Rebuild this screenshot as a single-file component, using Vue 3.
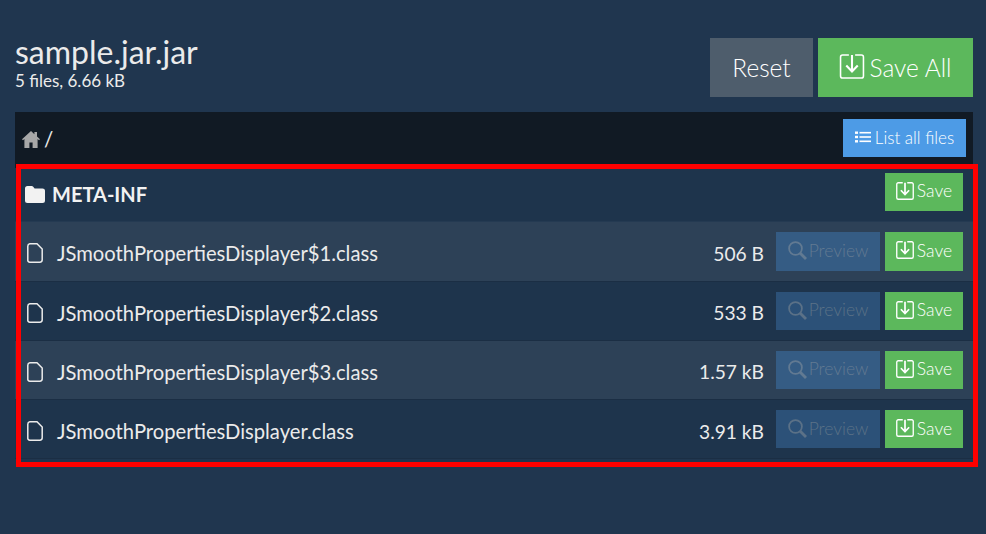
<script setup>
const files = [
  { name: 'JSmoothPropertiesDisplayer$1.class', size: '506 B' },
  { name: 'JSmoothPropertiesDisplayer$2.class', size: '533 B' },
  { name: 'JSmoothPropertiesDisplayer$3.class', size: '1.57 kB' },
  { name: 'JSmoothPropertiesDisplayer.class', size: '3.91 kB' },
]
const savePath = 'M9 1H3a2 2 0 0 0-2 2v18a2 2 0 0 0 2 2h18a2 2 0 0 0 2-2V3a2 2 0 0 0-2-2h-6'
const arrowPath = 'M12 1v15.5M6.5 11l5.5 5.8 5.5-5.8'
</script>

<template>
  <div class="page">
    <header class="head">
      <div class="title">
        <h1>sample.jar.jar</h1>
        <p>5 files, 6.66 kB</p>
      </div>
      <div class="actions">
        <button class="btn big reset"><span>Reset</span></button>
        <button class="btn big green">
          <svg class="ico-save-big" viewBox="0 0 24 24" fill="none" stroke="currentColor" stroke-width="1.5"><path :d="savePath"/><path :d="arrowPath" stroke-width="2"/></svg>
          <span>Save All</span>
        </button>
      </div>
    </header>

    <div class="crumbs">
      <div class="path">
        <svg class="home" viewBox="0 0 18 17" fill="currentColor"><path d="M9 0 0 8.2l1 1.1 1.4-1.2V17h5v-5.4h3.2V17h5V8.1L17 9.3l1-1.1-3-2.7V1h-2.6v2.2z"/></svg>
        <span>/</span>
      </div>
      <button class="btn blue">
        <svg class="list" viewBox="0 0 16 12" fill="currentColor"><rect x="0" y="0.5" width="3" height="2.4"/><rect x="0" y="4.8" width="3" height="2.4"/><rect x="0" y="9.1" width="3" height="2.4"/><rect x="4.5" y="0.9" width="11.5" height="1.6"/><rect x="4.5" y="5.2" width="11.5" height="1.6"/><rect x="4.5" y="9.5" width="11.5" height="1.6"/></svg>
        <span>List all files</span>
      </button>
    </div>

    <div class="table">
      <div class="row folder">
        <div class="name strong">
          <svg class="folder-ico" viewBox="0 0 20 17" fill="currentColor"><path d="M2.5 0h4.2a2 2 0 0 1 1.5.7L9.6 2.4H17.5A2.5 2.5 0 0 1 20 5v9.5a2.5 2.5 0 0 1-2.5 2.5h-15A2.5 2.5 0 0 1 0 14.500V2.500A2.500 2.500 0 0 1 2.500 0z"/></svg>
          <span>META-INF</span>
        </div>
        <button class="btn green small">
          <svg class="ico-save" viewBox="0 0 24 24" fill="none" stroke="currentColor" stroke-width="1.8"><path :d="savePath"/><path :d="arrowPath" stroke-width="2.3"/></svg>
          <span>Save</span>
        </button>
      </div>
      <div v-for="(f, i) in files" :key="f.name" class="row" :class="{ odd: i % 2 === 0 }">
        <div class="name">
          <svg class="file-ico" viewBox="0 0 16 20" fill="none" stroke="currentColor" stroke-width="1.5"><path d="M2.800.8h7.200l5.200 5.200v10.800a2.400 2.400 0 0 1-2.400 2.400H2.800A2.100 2.100 0 0 1 .8 16.800V3.200A2.400 2.400 0 0 1 2.800.8z"/></svg>
          <span>{{ f.name }}</span>
        </div>
        <div class="size">{{ f.size }}</div>
        <button class="btn preview">
          <svg class="search" viewBox="0 0 19 19" fill="none" stroke="currentColor"><circle cx="7.500" cy="7.500" r="6.400" stroke-width="1.800"/><path d="m12 12 6 6" stroke-width="2.800"/></svg>
          <span>Preview</span>
        </button>
        <button class="btn green small">
          <svg class="ico-save" viewBox="0 0 24 24" fill="none" stroke="currentColor" stroke-width="1.8"><path :d="savePath"/><path :d="arrowPath" stroke-width="2.3"/></svg>
          <span>Save</span>
        </button>
      </div>
      <div class="mark"></div>
    </div>
  </div>
</template>

<style scoped>
.page {
  box-sizing: border-box;
  width: 986px;
  height: 534px;
  padding: 0 13px 0 15px;
  background: #20364f;
  color: #ebebeb;
  font-family: Lato, sans-serif;
  overflow: hidden;
}
.head {
  display: flex;
  justify-content: space-between;
  height: 112px;
  padding-top: 38px;
  box-sizing: border-box;
}
h1 {
  margin: -3px 0 0;
  font-size: 32px;
  font-weight: 400;
  line-height: 33px;
}
.title p {
  margin: 3px 0 0;
  font-size: 17px;
  line-height: 20px;
}
.actions {
  display: flex;
  gap: 5px;
  height: 59px;
}
.btn {
  display: inline-flex;
  align-items: center;
  justify-content: center;
  border: 0;
  border-radius: 0;
  padding: 0;
  color: #fff;
  font-family: Lato, sans-serif;
}
.btn span {
  position: relative;
  top: -1px;
}
.btn.big span {
  top: 0;
}
.big {
  font-size: 24.5px;
  font-weight: 300;
  height: 59px;
}
.reset {
  width: 103px;
  background: #4e5d6c;
}
.green {
  background: #5cb85c;
}
.big.green {
  width: 155px;
}
.ico-save-big {
  width: 26px;
  height: 25px;
  margin-right: 4px;
  margin-top: -3px;
}
.crumbs {
  display: flex;
  justify-content: space-between;
  align-items: flex-start;
  height: 56px;
  padding: 7px 7px 0;
  background: #111a24;
  box-sizing: border-box;
}
.path {
  display: flex;
  align-items: center;
  gap: 4px;
  height: 40px;
  font-size: 20.5px;
  color: #ebebeb;
}
.home {
  width: 18px;
  height: 17px;
  color: #a8a8a8;
}
.blue {
  width: 123px;
  height: 38px;
  background: #4d9be6;
  font-size: 17px;
  font-weight: 300;
}
.list {
  width: 16px;
  height: 12px;
  margin-right: 4px;
  margin-top: -3px;
}
.table {
  position: relative;
}
.row {
  display: flex;
  align-items: center;
  height: 59.3px;
  padding: 0 10px 0 9px;
  gap: 5px;
  box-sizing: border-box;
  background: #1e344c;
  border-bottom: 1px solid #1b2e44;
}
.row.odd {
  background: #2d4157;
}
.row.folder {
  height: 54.25px;
  padding-bottom: 5.25px;
  border-bottom-color: #243a52;
}
.name {
  flex: 1;
  display: flex;
  align-items: center;
  font-size: 20.2px;
  color: #ebebeb;
  padding: 4px 0 0 3px;
}
.strong {
  font-size: 20px;
  font-weight: 700;
  padding: 4px 0 0 1px;
  color: #f2f2f2;
}
.folder-ico {
  width: 20px;
  height: 17px;
  margin-right: 7px;
}
.file-ico {
  width: 16px;
  height: 20px;
  margin-right: 14px;
}
.size {
  font-size: 19.2px;
  margin-right: 7px;
  padding-top: 4px;
}
.small {
  width: 78px;
  height: 38.3px;
  font-size: 17.5px;
  font-weight: 300;
}
.ico-save {
  width: 18px;
  height: 18px;
  margin-right: 3px;
  margin-top: -2px;
}
.preview {
  width: 104px;
  height: 38.3px;
  background: #2c5178;
  color: #5b7187;
  font-size: 17.5px;
  font-weight: 300;
}
.row.odd .preview {
  background: #355c84;
  color: #627a92;
}
.search {
  width: 19px;
  height: 19px;
  margin-right: 2px;
  margin-top: -1px;
}
.mark {
  position: absolute;
  left: 1px;
  top: -4px;
  width: 962px;
  height: 303px;
  box-sizing: border-box;
  border: 5px solid #ff0000;
  pointer-events: none;
}
</style>

<style>
html, body { margin: 0; background: #20364f; }
</style>
